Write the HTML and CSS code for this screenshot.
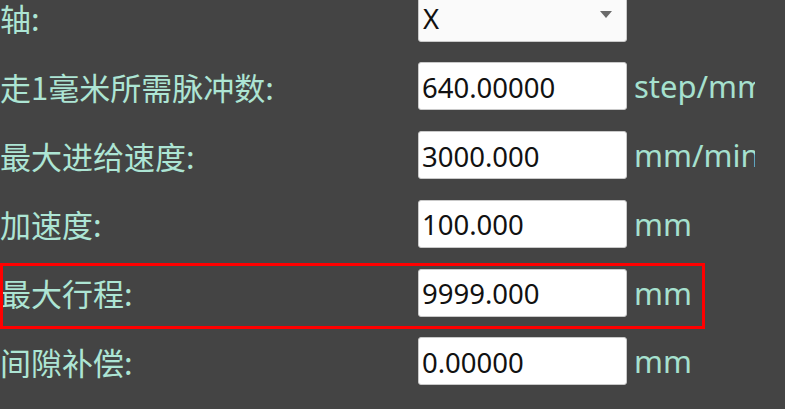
FILE: index.html
```html
<!DOCTYPE html>
<html lang="zh">
<head>
<meta charset="utf-8">
<title>轴参数</title>
<link rel="stylesheet" href="styles.css">
</head>
<body>
<div class="form">
  <div class="row">
    <div class="label">轴:</div>
    <div class="select">
      <span class="select-value">X</span>
      <svg class="select-arrow" width="12" height="7" viewBox="0 0 12 7"><path d="M0 0H12L6 7Z" fill="#6a6a6a"/></svg>
    </div>
  </div>
  <div class="row">
    <div class="label">走1毫米所需脉冲数:</div>
    <input class="field" type="text" value="640.00000">
    <div class="unit">step/mm</div>
  </div>
  <div class="row">
    <div class="label">最大进给速度:</div>
    <input class="field" type="text" value="3000.000">
    <div class="unit">mm/min</div>
  </div>
  <div class="row">
    <div class="label">加速度:</div>
    <input class="field" type="text" value="100.000">
    <div class="unit">mm</div>
  </div>
  <div class="row row-highlight">
    <div class="label">最大行程:</div>
    <input class="field" type="text" value="9999.000">
    <div class="unit">mm</div>
    <div class="highlight"></div>
  </div>
  <div class="row">
    <div class="label">间隙补偿:</div>
    <input class="field" type="text" value="0.00000">
    <div class="unit">mm</div>
  </div>
</div>
</body>
</html>
```
FILE: styles.css
```css
html, body {
  margin: 0;
  padding: 0;
  width: 785px;
  height: 409px;
  overflow: hidden;
  background: #444444;
}

.form {
  display: flex;
  flex-direction: column;
  gap: 20.75px;
  margin-top: -6.5px;
}

.row {
  display: flex;
  align-items: center;
  height: 48px;
}

.row-highlight {
  position: relative;
}

.label {
  width: 418px;
  flex: none;
  font-family: "Noto Sans CJK SC", "Noto Sans", sans-serif;
  font-size: 31px;
  color: #ade5d4;
  white-space: nowrap;
}

.field,
.select {
  width: 209px;
  height: 48px;
  flex: none;
  box-sizing: border-box;
  border: 1px solid #c9c9c9;
  border-radius: 3px;
  background: #ffffff;
  font-family: "Noto Sans", "Open Sans", sans-serif;
  font-size: 27.5px;
  color: #111111;
  margin: 0;
  padding: 2px 0 0 3px;
  outline: none;
  appearance: none;
}

.select {
  display: flex;
  align-items: center;
  justify-content: space-between;
  background: #fafafa;
  padding: 2px 14px 0 4px;
}

.select-value {
  line-height: 1;
}

.select-arrow {
  display: block;
  margin-top: -8px;
}

.unit {
  width: 121px;
  margin-left: 7px;
  flex: none;
  overflow: hidden;
  white-space: nowrap;
  font-family: "Noto Sans", "Open Sans", sans-serif;
  font-size: 31px;
  color: #a6e1cf;
}

.highlight {
  position: absolute;
  left: 0;
  top: -5.5px;
  width: 705px;
  height: 66px;
  box-sizing: border-box;
  border: 3px solid #ff0000;
  pointer-events: none;
}
```
